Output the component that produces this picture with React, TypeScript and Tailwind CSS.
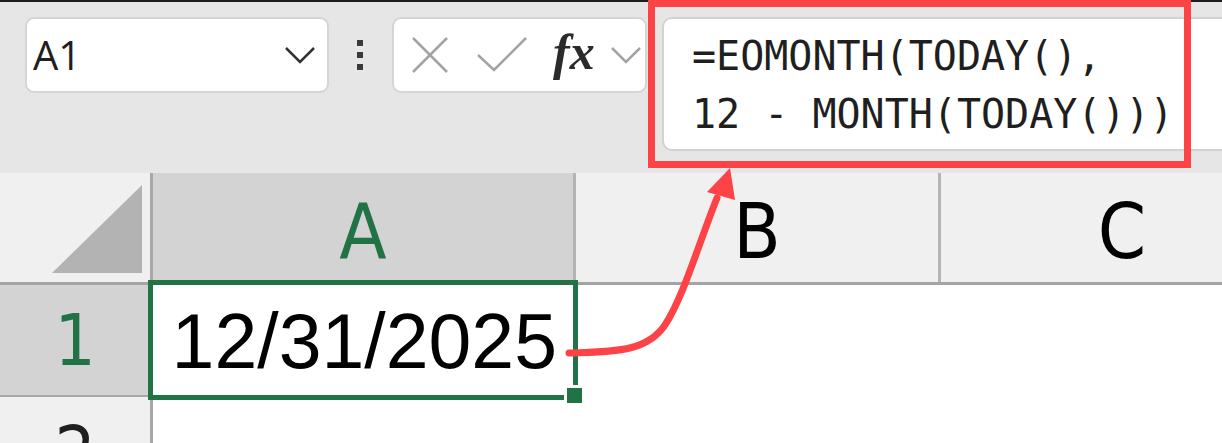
import React from "react";

const sans = "font-['Liberation_Sans',Arial,sans-serif]";
const head = "font-['DejaVu_Sans_Condensed','DejaVu_Sans',sans-serif] [font-stretch:condensed]";

function Chevron({ className = "" }: { className?: string }) {
  return (
    <svg width="30" height="18" viewBox="0 0 30 18" className={className}>
      <polyline points="1,2 15,16 29,2" fill="none" stroke="currentColor" strokeWidth="2.5" />
    </svg>
  );
}

function NameBox() {
  return (
    <div className="ml-[25px] shrink-0 w-[304px] h-[76px] rounded-[9px] border-2 border-[#d5d5d5] bg-white flex items-center justify-between pl-[6px] pr-[12px]">
      <span className="font-['Open_Sans',sans-serif] text-[40px] leading-none text-[#1f1f1f]">A1</span>
      <Chevron className="text-[#333]" />
    </div>
  );
}

function FxBox() {
  return (
    <div className="ml-[29px] shrink-0 w-[255px] h-[76px] rounded-[9px] border-2 border-[#d5d5d5] bg-white flex items-center pl-[18px]">
      <svg width="36" height="36" viewBox="0 0 36 36" className="shrink-0">
        <line x1="1" y1="1" x2="35" y2="35" stroke="#a3a3a3" strokeWidth="2.5" />
        <line x1="35" y1="1" x2="1" y2="35" stroke="#a3a3a3" strokeWidth="2.5" />
      </svg>
      <svg width="50" height="36" viewBox="0 0 50 36" className="ml-[29px] shrink-0">
        <polyline points="1,18 17,33 49,1" fill="none" stroke="#a3a3a3" strokeWidth="2.5" />
      </svg>
      <span className="ml-[26px] font-['Liberation_Serif',serif] italic font-bold text-[50px] leading-none text-[#2b2b2b] -mt-[6px]">
        fx
      </span>
      <svg width="30" height="18" viewBox="0 0 30 18" className="ml-[16px] shrink-0">
        <polyline points="1,2 15,16 29,2" fill="none" stroke="#a3a3a3" strokeWidth="2.5" />
      </svg>
    </div>
  );
}

function Toolbar() {
  return (
    <div className="h-[171px] bg-[#e6e6e6] flex items-start pt-[15px]">
      <NameBox />
      <div className="ml-[28px] shrink-0 h-[76px] flex flex-col justify-center gap-[6px]">
        <div className="w-[6px] h-[6px] bg-[#3a3a3a]" />
        <div className="w-[6px] h-[6px] bg-[#3a3a3a]" />
        <div className="w-[6px] h-[6px] bg-[#3a3a3a]" />
      </div>
      <FxBox />
      <div className="ml-[15px] w-[620px] shrink-0 h-[134px] rounded-[10px] border-2 border-[#d2d2d2] bg-white pl-[28px] pt-[8px]">
        <div className="font-['DejaVu_Sans_Mono',monospace] text-[40px] leading-[58px] text-[#1f1f1f] whitespace-pre">
          <div>=EOMONTH(TODAY(),</div>
          <div>12 - MONTH(TODAY()))</div>
        </div>
      </div>
    </div>
  );
}

function Sheet() {
  return (
    <div className="relative">
      <div className="flex h-[112px] border-b-[3px] border-[#a4a4a4]">
        <div className="w-[153px] shrink-0 bg-[#f0f0f0] border-r-[3px] border-[#a8a8a8] relative">
          <svg width="150" height="109" viewBox="0 0 150 109" className="block">
            <polygon points="142,12 142,100 52,100" fill="#b3b3b3" />
          </svg>
        </div>
        <div className={`w-[423px] shrink-0 bg-[#d3d3d3] border-r-[3px] border-[#b4b4b4] flex items-center justify-center pt-[8px] ${head} text-[77px] leading-none text-[#217346]`}>
          A
        </div>
        <div className={`w-[365px] shrink-0 bg-[#f0f0f0] border-r-[3px] border-[#b4b4b4] flex items-center justify-center pt-[8px] ${head} text-[77px] leading-none text-black`}>
          B
        </div>
        <div className={`w-[362px] shrink-0 bg-[#f0f0f0] flex items-center justify-center pt-[8px] ${head} text-[77px] leading-none text-black`}>
          C
        </div>
      </div>

      <div className="flex h-[112px]">
        <div className={`w-[153px] shrink-0 bg-[#d3d3d3] border-r-[3px] border-b-[2px] border-[#a8a8a8] flex items-center justify-center ${head} text-[72px] leading-none text-[#217346]`}>
          1
        </div>
        <div className={`w-[423px] shrink-0 bg-white flex items-center justify-end pr-[19px] ${sans} text-[77px] leading-none text-black`}>
          12/31/2025
        </div>
        <div className="flex-1 bg-white" />
      </div>

      <div className="flex h-[110px]">
        <div className={`w-[153px] shrink-0 bg-[#f0f0f0] border-r-[3px] border-[#a8a8a8] flex items-center justify-center ${head} text-[72px] leading-none text-[#1f1f1f]`}>
          2
        </div>
        <div className="flex-1 bg-white" />
      </div>

      {/* selected cell */}
      <div className="absolute left-[148px] top-[107px] w-[430px] h-[120px] border-[5px] border-[#217346]" />
      <div className="absolute left-[564px] top-[212px] w-[21px] h-[21px] bg-[#217346] border-[3px] border-white" />
    </div>
  );
}

export default function App() {
  return (
    <div className="relative w-[1222px] h-[443px] overflow-hidden bg-white">
      <div className="h-[2px] bg-[#1c1c1c]" />
      <Toolbar />
      <Sheet />

      {/* annotation */}
      <div className="absolute left-[648px] top-0 w-[543px] h-[168px] border-[7px] border-[#fe4346]" />
      <svg className="absolute inset-0 pointer-events-none" width="1222" height="443" viewBox="0 0 1222 443">
        <path
          d="M569,353 C620,352 648,350 665,325 C683,298 700,240 717,198"
          fill="none"
          stroke="#fe4346"
          strokeWidth="7"
          strokeLinecap="round"
        />
        <polygon points="730,168 707,192 735,200" fill="#fe4346" />
      </svg>
    </div>
  );
}
